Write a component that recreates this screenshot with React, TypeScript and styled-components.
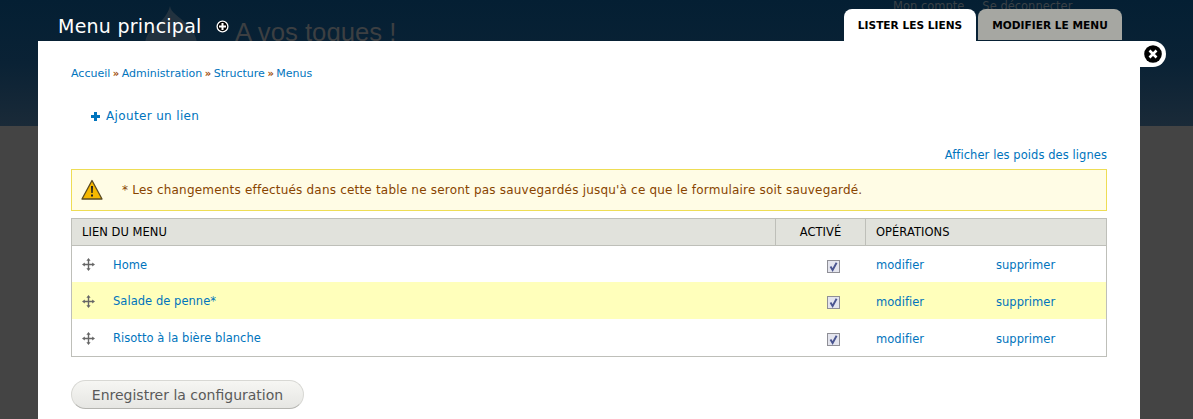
import React from "react";
import styled, { createGlobalStyle } from "styled-components";

const Global = createGlobalStyle`
  html, body { margin: 0; padding: 0; width: 1193px; height: 419px; overflow: hidden; background: #444; }
  * { box-sizing: border-box; }
  body { font-family: "DejaVu Sans", Verdana, sans-serif; }
`;
const Page = styled.div`position: relative; width: 1193px; height: 419px; overflow: hidden; background: #444;`;
const SiteHeader = styled.header`
  position: relative; height: 126px;
  background: linear-gradient(180deg, #041f33 0%, #0a2235 50%, #1a2a38 100%);
`;
const SiteName = styled.div`
  position: absolute; left: 235px; top: 18px; font: 25.7px "Liberation Sans", Arial, sans-serif; color: #3c3f42;
`;
const Logo = styled.svg`position: absolute; left: 140px; top: 0;`;
const UserLinks = styled.div`
  position: absolute; left: 893px; top: 0; display: flex; gap: 18px;
  font: 11.5px/12px "DejaVu Sans", sans-serif; color: #3a4146;
`;
const Overlay = styled.div`position: absolute; inset: 0; display: flex; flex-direction: column;`;
const TitleBar = styled.div`
  height: 41px; margin: 0 71px 0 58px; display: flex; align-items: flex-start; justify-content: space-between;
`;
const TitleWrap = styled.div`display: flex; align-items: center; gap: 14px; padding-top: 14px;`;
const Title = styled.h1`margin: 0; font: 400 19px/24px "DejaVu Sans", sans-serif; color: #fff; letter-spacing: .25px;`;
const Tabs = styled.div`display: flex; gap: 2px; padding-top: 9px;`;
const Tab = styled.div<{ $active?: boolean }>`
  width: ${(p) => (p.$active ? 132 : 144)}px;
  height: ${(p) => (p.$active ? 32 : 31)}px; border-radius: 8px 8px 0 0; text-align: center;
  background: ${(p) => (p.$active ? "#fff" : "#a6a7a2")};
  color: #000; font: 700 10.6px/32px "DejaVu Sans", sans-serif; white-space: nowrap;
`;
const Sheet = styled.main`
  position: relative; flex: 1; margin: 0 53px 0 38px; background: #fff; padding: 26px 33px 0;
`;
const CloseTab = styled.div`
  position: absolute; left: 1102px; top: 0; width: 26px; height: 26px; border-radius: 0 13px 13px 0; background: #fff;
  display: flex; align-items: center; justify-content: flex-end; padding-right: 4px;
`;
const Crumbs = styled.nav`font-size: 11px; line-height: 14px; height: 14px; white-space: nowrap;`;
const A = styled.a`color: #0074bd; text-decoration: none;`;
const Sep = styled.span`margin: 0 2.5px; color: #a04d08; font-weight: 700; font-size: 10px;`;
const ActionLine = styled.div`
  display: flex; align-items: center; gap: 6px; margin: 27px 0 0 20px; font-size: 12px; letter-spacing: .35px;
  line-height: 16px; height: 16px; color: #0074bd;
`;
const WeightRow = styled.div`text-align: right; margin-top: 24px; font-size: 11.5px; letter-spacing: .07px; line-height: 14px; height: 14px;`;
const Warning = styled.div`
  display: flex; align-items: center; height: 42px; margin-top: 7px; border: 1px solid #eedd55;
  background: #fffce5; color: #884400; font-size: 12px; letter-spacing: .2px; padding-left: 9px; white-space: nowrap;
`;
const WarnText = styled.span`margin-left: 19px;`;
const Table = styled.div`margin-top: 7px; border: 1px solid #bebfb9; height: 139px;`;
const Row = styled.div<{ $head?: boolean; $hl?: boolean }>`
  display: grid; grid-template-columns: 703px 90px 131px 1fr; align-items: center;
  height: ${(p) => (p.$head ? 27 : 37)}px;
  background: ${(p) => (p.$head ? "#e1e2dc" : p.$hl ? "#ffffbb" : "#fff")};
  border-bottom: ${(p) => (p.$head ? "1px solid #bebfb9" : "0")};
  font-size: 11.5px; letter-spacing: .04px; color: #000;
  &:nth-child(2) { height: 36px; }
`;
const Th = styled.div<{ $center?: boolean; $rule?: boolean }>`
  height: 100%; line-height: 26px; padding-left: 10px;
  ${(p) => p.$center && "text-align: center; padding-left: 0;"}
  ${(p) => p.$rule && "border-left: 1px solid #bebfb9;"}
`;
const NameCell = styled.div`display: flex; align-items: center; padding-left: 10px; gap: 18px; line-height: 14px; padding-top: 1px;`;
const CheckCell = styled.div`display: flex; justify-content: center; padding-left: 27px; padding-top: 4px;`;
const OpCell = styled.div`padding-left: 11px; line-height: 14px; padding-top: 2px;`;
const LastCell = styled.div`line-height: 14px; padding-top: 2px;`;
const Submit = styled.button`
  display: block; margin-top: 23px; width: 233px; height: 29px; padding: 0; border-radius: 15px;
  border: 1px solid #d8d8d4; border-bottom-color: #b4b4b0;
  background: linear-gradient(180deg, #f6f6f3 0%, #e6e6e3 100%);
  color: #5a5a5a; font: 14px "DejaVu Sans", sans-serif;
`;

const Move = () => (
  <svg width="13" height="13" viewBox="0 0 13 13" fill="#666">
    <path d="M5.8 2h1.4v9H5.8zM2 5.8h9v1.4H2z" />
    <path d="M6.5 0 8.6 2.8H4.4zM6.5 13l-2.1-2.8h4.2zM0 6.5l2.8-2.1v4.2zM13 6.5l-2.8 2.1V4.4z" />
  </svg>
);
const Check = () => (
  <svg width="13" height="13" viewBox="0 0 13 13">
    <rect x=".5" y=".5" width="12" height="12" fill="#e4e5ee" stroke="#8f8f96" />
    <path d="M3.5 6.5 5.6 10 9.6 2.8" fill="none" stroke="#4a5590" strokeWidth="1.9" />
  </svg>
);
const rows = [
  { name: "Home" },
  { name: "Salade de penne*", hl: true },
  { name: "Risotto à la bière blanche" },
];

export default function App() {
  return (
    <Page>
      <Global />
      <SiteHeader>
        <Logo width="70" height="45" viewBox="0 0 70 45">
          <path d="M30 6c1 7 9 10 18 19 6 7 9 13 9 20H5c0-9 5-15 12-20C22 21 28 14 30 6z" fill="#22323f" />
        </Logo>
        <SiteName>A vos toques !</SiteName>
        <UserLinks><span>Mon compte</span><span>Se déconnecter</span></UserLinks>
      </SiteHeader>
      <Overlay>
        <TitleBar>
          <TitleWrap>
            <Title>Menu principal</Title>
            <svg width="13" height="13" viewBox="0 0 13 13">
              <circle cx="6.5" cy="6.5" r="5.4" fill="#000" stroke="#fff" strokeWidth="1.3" />
              <path d="M5.5 3h2v2.5H10v2H7.5V10h-2V7.5H3v-2h2.5z" fill="#fff" />
            </svg>
          </TitleWrap>
          <Tabs>
            <Tab $active>LISTER LES LIENS</Tab>
            <Tab>MODIFIER LE MENU</Tab>
          </Tabs>
        </TitleBar>
        <Sheet>
          <CloseTab>
            <svg width="18" height="18" viewBox="0 0 18 18">
              <circle cx="9" cy="9" r="8.8" fill="#000" />
              <path d="M5.5 5.5l7 7M12.5 5.5l-7 7" stroke="#fff" strokeWidth="2.6" />
            </svg>
          </CloseTab>
          <Crumbs>
            <A>Accueil</A><Sep>»</Sep><A>Administration</A><Sep>»</Sep><A>Structure</A><Sep>»</Sep><A>Menus</A>
          </Crumbs>
          <ActionLine>
            <svg width="9" height="9" viewBox="0 0 9 9"><path d="M3 0h3v3h3v3H6v3H3V6H0V3h3z" fill="#0074bd" /></svg>
            <span>Ajouter un lien</span>
          </ActionLine>
          <WeightRow><A>Afficher les poids des lignes</A></WeightRow>
          <Warning>
            <svg width="22" height="22" viewBox="0 0 22 22">
              <path d="M11 1.5 21 20H1z" fill="#f6b800" stroke="#5a4a20" strokeWidth="1.3" strokeLinejoin="round" />
              <path d="M10 7h2l-.3 7h-1.4zM10 15.5h2v2h-2z" fill="#222" />
            </svg>
            <WarnText>* Les changements effectués dans cette table ne seront pas sauvegardés jusqu'à ce que le formulaire soit sauvegardé.</WarnText>
          </Warning>
          <Table>
            <Row $head>
              <Th>LIEN DU MENU</Th>
              <Th $center $rule>ACTIVÉ</Th>
              <Th $rule>OPÉRATIONS</Th>
              <div />
            </Row>
            {rows.map((r) => (
              <Row key={r.name} $hl={r.hl}>
                <NameCell><Move /><A>{r.name}</A></NameCell>
                <CheckCell><Check /></CheckCell>
                <OpCell><A>modifier</A></OpCell>
                <LastCell><A>supprimer</A></LastCell>
              </Row>
            ))}
          </Table>
          <Submit>Enregistrer la configuration</Submit>
        </Sheet>
      </Overlay>
    </Page>
  );
}
